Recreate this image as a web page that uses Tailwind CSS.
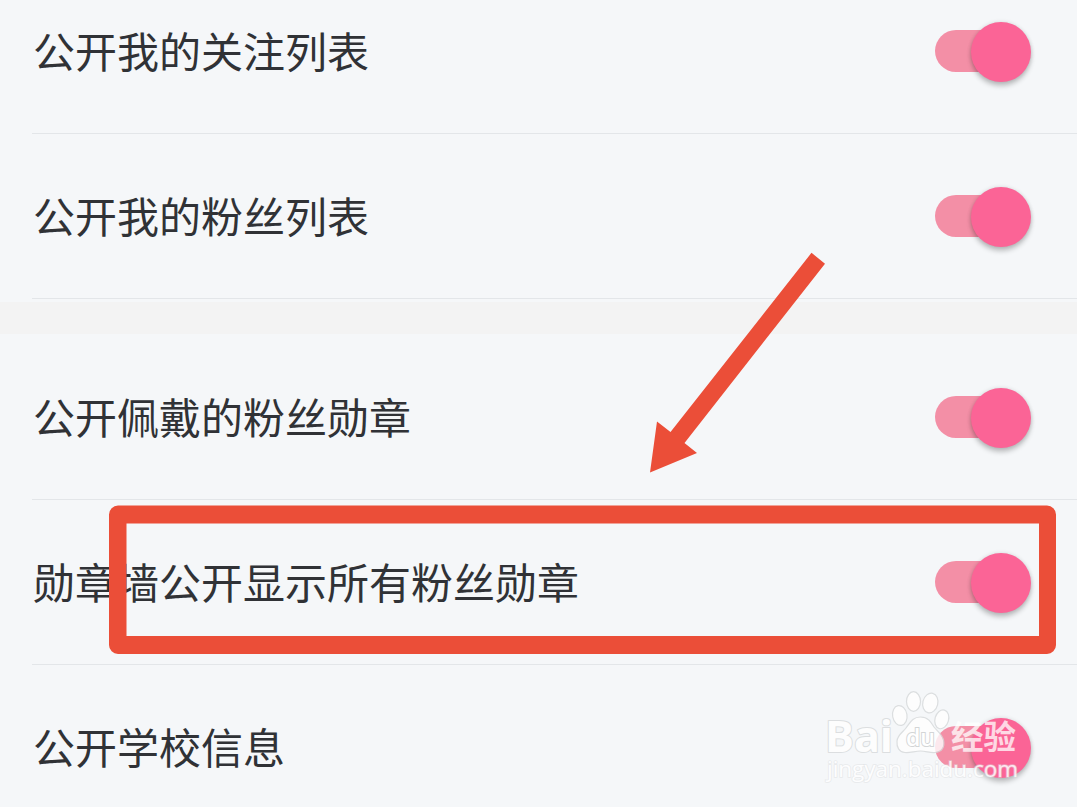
<!DOCTYPE html>
<html lang="zh-CN">
<head>
    <meta charset="UTF-8" />
    <meta name="viewport" content="width=device-width, initial-scale=1.0">
    <title>隐私设置</title>
    <script src="https://cdn.jsdelivr.net/npm/@tailwindcss/browser@4"></script>
</head>
<body class="bg-[#f5f7f9]">

    <main class="relative w-[1077px] h-[807px] overflow-hidden bg-[#f5f7f9] font-['Noto_Sans_CJK_SC',sans-serif] text-[42px] leading-none text-[#303236]">

        <section>
            <div class="ml-8 h-[134px] pb-[31px] pr-[47px] flex items-center justify-between border-b border-[#e3e6e9]">
                <span class="pl-px pb-[3px]">公开我的关注列表</span>
                <div class="w-[95px] h-[60px] flex items-center">
                    <div class="w-[76px] h-[42px] shrink-0 rounded-full bg-[#f38fa6]"></div>
                    <div class="w-[60px] h-[60px] mt-px -ml-[40.5px] shrink-0 rounded-full bg-[#fb6496] shadow-[0_4px_5px_rgba(0,0,0,0.22),0_0_4px_rgba(0,0,0,0.12)]"></div>
                </div>
            </div>
            <div class="ml-8 h-[165px] pr-[47px] flex items-center justify-between border-b border-[#e3e6e9]">
                <span class="pl-px pb-[3px]">公开我的粉丝列表</span>
                <div class="w-[95px] h-[60px] flex items-center">
                    <div class="w-[76px] h-[42px] shrink-0 rounded-full bg-[#f38fa6]"></div>
                    <div class="w-[60px] h-[60px] mt-px -ml-[40.5px] shrink-0 rounded-full bg-[#fb6496] shadow-[0_4px_5px_rgba(0,0,0,0.22),0_0_4px_rgba(0,0,0,0.12)]"></div>
                </div>
            </div>
        </section>

        <div class="mt-[3px] h-8 bg-[#f3f3f3]"></div>

        <section>
            <div class="ml-8 h-[166px] pt-px pr-[47px] flex items-center justify-between border-b border-[#e3e6e9]">
                <span class="pl-px pb-[3px]">公开佩戴的粉丝勋章</span>
                <div class="w-[95px] h-[60px] flex items-center">
                    <div class="w-[76px] h-[42px] shrink-0 rounded-full bg-[#f38fa6]"></div>
                    <div class="w-[60px] h-[60px] mt-px -ml-[40.5px] shrink-0 rounded-full bg-[#fb6496] shadow-[0_4px_5px_rgba(0,0,0,0.22),0_0_4px_rgba(0,0,0,0.12)]"></div>
                </div>
            </div>
            <div class="ml-8 h-[165px] pr-[47px] flex items-center justify-between border-b border-[#e3e6e9]">
                <span class="pl-px pb-[3px]">勋章墙公开显示所有粉丝勋章</span>
                <div class="w-[95px] h-[60px] flex items-center">
                    <div class="w-[76px] h-[42px] shrink-0 rounded-full bg-[#f38fa6]"></div>
                    <div class="w-[60px] h-[60px] mt-px -ml-[40.5px] shrink-0 rounded-full bg-[#fb6496] shadow-[0_4px_5px_rgba(0,0,0,0.22),0_0_4px_rgba(0,0,0,0.12)]"></div>
                </div>
            </div>
            <div class="ml-8 h-[165px] pr-[47px] flex items-center justify-between border-b border-[#e3e6e9]">
                <span class="pl-px pb-[3px]">公开学校信息</span>
                <div class="w-[95px] h-[60px] flex items-center">
                    <div class="w-[76px] h-[42px] shrink-0 rounded-full bg-[#f38fa6]"></div>
                    <div class="w-[60px] h-[60px] mt-px -ml-[40.5px] shrink-0 rounded-full bg-[#fb6496] shadow-[0_4px_5px_rgba(0,0,0,0.22),0_0_4px_rgba(0,0,0,0.12)]"></div>
                </div>
            </div>
        </section>

        <!-- highlight box and arrow -->
        <div class="absolute left-[109px] top-[505px] w-[947px] h-[149px]">
            <svg class="w-full h-full" viewBox="0 0 947 149"><path fill="#eb4e38" fill-rule="evenodd" d="M9 .5H938a9 9 0 0 1 9 9V140a9 9 0 0 1-9 9H9a9 9 0 0 1-9-9V9.500a9 9 0 0 1 9-9ZM17.500 18.500V131H930V18.500Z" /></svg>
        </div>
        <svg class="absolute left-[640px] top-[240px] w-[200px] h-[240px]" viewBox="640 240 200 240"><path fill="#eb4e38" d="M811.500 252.800L825 263.700L684.500 443L697 453L650 472.500L657 421.500L670.500 432Z" /></svg>

        <!-- watermark -->
        <svg class="absolute left-[810px] top-[680px] w-[240px] h-[127px]" viewBox="0 0 240 127">
            <g fill="#fff" stroke="#d6d9da" stroke-width="1.200" opacity=".8">
                <ellipse cx="103.500" cy="21.500" rx="7" ry="9.800" />
                <ellipse cx="120.300" cy="23" rx="7.500" ry="10" transform="rotate(14 120.300 23)" />
                <ellipse cx="89.800" cy="35.500" rx="7.200" ry="10" transform="rotate(-10 89.800 35.500)" />
                <ellipse cx="131.800" cy="39.300" rx="6.800" ry="9.600" transform="rotate(16 131.800 39.300)" />
                <path d="M110.500 37C118 37 121 42 124 47C127 51 132 54 133.500 60C135 67 132 72 125 72.500C120 73 116 71 110.500 71C105 71 100 73 95 72.500C89 72 86.500 67 87 61C87.500 55 93 52 96 48C100 43 102 37 110.500 37Z" />
                <text x="15" y="71.500" font-size="43" font-weight="700" font-family="Open Sans, sans-serif" stroke-width="2" paint-order="stroke" stroke-linejoin="round" textLength="68" lengthAdjust="spacingAndGlyphs">Bai</text>
            </g>
            <text x="96" y="65.500" font-size="24" font-family="Open Sans, sans-serif" fill="#fff" stroke="#d3d5d6" stroke-width="2" paint-order="stroke" font-weight="600" textLength="29" lengthAdjust="spacingAndGlyphs">du</text>
            <text x="141" y="68.500" font-size="33" font-weight="700" font-family="Noto Sans CJK SC, sans-serif" fill="#fff" opacity=".75" textLength="65" lengthAdjust="spacingAndGlyphs">经验</text>
            <text x="17" y="97" font-size="21.500" font-family="Open Sans, sans-serif" fill="#fff" stroke="#dcdee0" stroke-width="1.600" stroke-opacity=".6" paint-order="stroke" opacity=".85" textLength="191" lengthAdjust="spacingAndGlyphs">jingyan.baidu.com</text>
        </svg>
    </main>

</body>
</html>
